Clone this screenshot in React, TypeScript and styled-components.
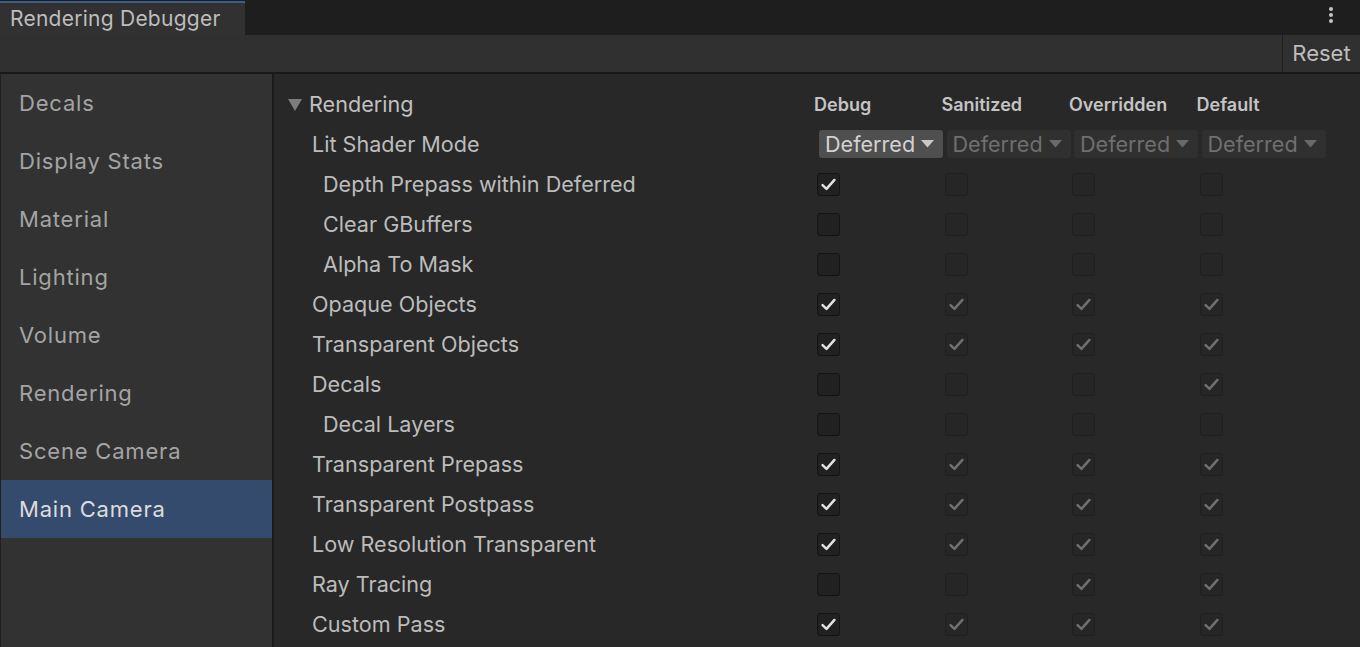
import React from "react";
import styled, { createGlobalStyle } from "styled-components";

const GlobalStyle = createGlobalStyle`
  html, body {
    margin: 0;
    padding: 0;
    background: #282828;
    font-family: Inter, "Noto Sans", "Liberation Sans", sans-serif;
    overflow: hidden;
  }
`;

type Row = {
  label: string;
  indent?: boolean;
  values?: boolean[];
  dropdown?: boolean;
};

const rows: Row[] = [
  { label: "Lit Shader Mode", dropdown: true },
  { label: "Depth Prepass within Deferred", indent: true, values: [true, false, false, false] },
  { label: "Clear GBuffers", indent: true, values: [false, false, false, false] },
  { label: "Alpha To Mask", indent: true, values: [false, false, false, false] },
  { label: "Opaque Objects", values: [true, true, true, true] },
  { label: "Transparent Objects", values: [true, true, true, true] },
  { label: "Decals", values: [false, false, false, true] },
  { label: "Decal Layers", indent: true, values: [false, false, false, false] },
  { label: "Transparent Prepass", values: [true, true, true, true] },
  { label: "Transparent Postpass", values: [true, true, true, true] },
  { label: "Low Resolution Transparent", values: [true, true, true, true] },
  { label: "Ray Tracing", values: [false, false, true, true] },
  { label: "Custom Pass", values: [true, true, true, true] },
];

const panels = [
  "Decals",
  "Display Stats",
  "Material",
  "Lighting",
  "Volume",
  "Rendering",
  "Scene Camera",
  "Main Camera",
];

const columns = ["Debug", "Sanitized", "Overridden", "Default"];

const Check: React.FC<{ color: string }> = ({ color }) => (
  <svg width="17" height="17" viewBox="0 0 16 16">
    <path
      d="M2.4 8.6 L6.1 12.1 L13.6 3.7"
      fill="none"
      stroke={color}
      strokeWidth="2.3"
      strokeLinecap="round"
      strokeLinejoin="round"
    />
  </svg>
);

const Arrow: React.FC<{ color: string }> = ({ color }) => (
  <svg width="13" height="8" viewBox="0 0 13 8">
    <path d="M0 0 L13 0 L6.5 7.5 Z" fill={color} />
  </svg>
);

const App: React.FC = () => {
  return (
    <>
      <GlobalStyle />
      <Window>
        <TabStrip>
          <Tab>Rendering Debugger</Tab>
          <Kebab>
            <Dot />
            <Dot />
            <Dot />
          </Kebab>
        </TabStrip>
        <Toolbar>
          <ResetButton>Reset</ResetButton>
        </Toolbar>
        <Body>
          <Sidebar>
            {panels.map((p) => (
              <PanelItem key={p} $selected={p === "Main Camera"}>
                {p}
              </PanelItem>
            ))}
          </Sidebar>
          <Content>
            <Grid>
              <HeaderLabel>
                <Foldout>
                  <svg width="14" height="12" viewBox="0 0 14 12">
                    <path d="M0 0 L14 0 L7 12 Z" fill="#7d7d7d" />
                  </svg>
                </Foldout>
                Rendering
              </HeaderLabel>
              {columns.map((c) => (
                <ColumnTitle key={c}>{c}</ColumnTitle>
              ))}
              {rows.map((r) => (
                <React.Fragment key={r.label}>
                  <Label $indent={r.indent}>{r.label}</Label>
                  {r.dropdown
                    ? columns.map((c, i) => (
                        <Cell key={c}>
                          <Dropdown $active={i === 0}>
                            Deferred
                            <Arrow color={i === 0 ? "#c8c8c8" : "#6a6a6a"} />
                          </Dropdown>
                        </Cell>
                      ))
                    : r.values!.map((v, i) => (
                        <Cell key={i}>
                          <Box $active={i === 0}>
                            {v && <Check color={i === 0 ? "#e4e4e4" : "#707070"} />}
                          </Box>
                        </Cell>
                      ))}
                </React.Fragment>
              ))}
            </Grid>
          </Content>
        </Body>
      </Window>
    </>
  );
};

export default App;

const Window = styled.div`
  width: 1360px;
  height: 647px;
  display: flex;
  flex-direction: column;
  background: #282828;
`;

const TabStrip = styled.div`
  height: 35px;
  background: #1e1e1e;
  display: flex;
  align-items: flex-end;
  justify-content: space-between;
`;

const Tab = styled.div`
  width: 245px;
  height: 34px;
  box-sizing: border-box;
  border-top: 2px solid #3a5f8c;
  background: #313131;
  color: #bdbdbd;
  font-size: 21px;
  letter-spacing: 0.25px;
  padding-left: 10px;
  display: flex;
  align-items: center;
  padding-bottom: 2px;
`;

const Kebab = styled.div`
  align-self: stretch;
  width: 60px;
  display: flex;
  flex-direction: column;
  align-items: center;
  justify-content: center;
  gap: 2px;
  padding-bottom: 6px;
  padding-left: 1px;
  box-sizing: border-box;
`;

const Dot = styled.span`
  width: 4px;
  height: 4px;
  border-radius: 50%;
  background: #c4c4c4;
`;

const Toolbar = styled.div`
  height: 37px;
  background: #303030;
  border-bottom: 2px solid #191919;
  display: flex;
  justify-content: flex-end;
`;

const ResetButton = styled.div`
  width: 77px;
  border-left: 1px solid #1e1e1e;
  color: #bdbdbd;
  font-size: 22px;
  display: flex;
  align-items: center;
  justify-content: center;
  padding-bottom: 1px;
`;

const Body = styled.div`
  flex: 1;
  display: flex;
  min-height: 0;
`;

const Sidebar = styled.div`
  width: 274px;
  flex-shrink: 0;
  background: #323232;
  border-left: 1px solid #202020;
  border-right: 2px solid #1b1b1b;
  box-sizing: border-box;
`;

const PanelItem = styled.div<{ $selected?: boolean }>`
  height: 58px;
  display: flex;
  align-items: center;
  padding-left: 18px;
  font-size: 22px;
  letter-spacing: 0.8px;
  color: ${(p) => (p.$selected ? "#dcdcdc" : "#a4a4a4")};
  background: ${(p) => (p.$selected ? "#354b6d" : "transparent")};
`;

const Content = styled.div`
  flex: 1;
  padding-top: 10px;
  padding-right: 33px;
`;

const Grid = styled.div`
  display: grid;
  grid-template-columns: 1fr repeat(4, 127.5px);
  grid-auto-rows: 40px;
`;

const HeaderLabel = styled.div`
  display: flex;
  align-items: center;
  padding-left: 14px;
  font-size: 21.6px;
  color: #c0c0c0;
`;

const Foldout = styled.span`
  display: inline-flex;
  margin-right: 7px;
  margin-top: 2px;
`;

const ColumnTitle = styled.div`
  display: flex;
  align-items: center;
  margin-left: -3px;
  font-size: 18px;
  font-weight: 600;
  color: #c4c4c4;
`;

const Label = styled.div<{ $indent?: boolean }>`
  display: flex;
  align-items: center;
  padding-left: ${(p) => (p.$indent ? 49 : 38)}px;
  font-size: 21.6px;
  color: #bcbcbc;
`;

const Cell = styled.div`
  display: flex;
  align-items: center;
`;

const Dropdown = styled.div<{ $active?: boolean }>`
  margin-left: 2px;
  width: 124px;
  height: 28px;
  box-sizing: border-box;
  border-radius: 3px;
  background: ${(p) => (p.$active ? "#4f4f4f" : "#303030")};
  color: ${(p) => (p.$active ? "#d2d2d2" : "#6f6f6f")};
  font-size: 21.6px;
  display: flex;
  align-items: center;
  justify-content: space-between;
  padding: 0 9px 0 6px;
`;

const Box = styled.div<{ $active?: boolean }>`
  width: 23px;
  height: 23px;
  box-sizing: border-box;
  border-radius: 3px;
  background: ${(p) => (p.$active ? "#212121" : "#262626")};
  border: 1px solid ${(p) => (p.$active ? "#141414" : "#1f1f1f")};
  display: flex;
  align-items: center;
  justify-content: center;
`;
